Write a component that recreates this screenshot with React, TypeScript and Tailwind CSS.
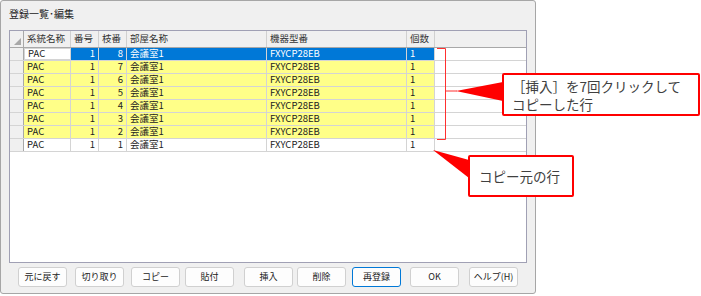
import React from "react";

const font = { fontFamily: '"Noto Sans CJK JP", "Noto Sans", sans-serif' };

type Row = { sys: string; no: string; br: string; room: string; model: string; qty: string };

const rows: Row[] = [8, 7, 6, 5, 4, 3, 2, 1].map((n) => ({
  sys: "PAC",
  no: "1",
  br: String(n),
  room: "会議室1",
  model: "FXYCP28EB",
  qty: "1",
}));

const cols = [
  { label: "系統名称", w: "w-[47px]" },
  { label: "番号", w: "w-[28px]" },
  { label: "枝番", w: "w-[28px]" },
  { label: "部屋名称", w: "w-[140px]" },
  { label: "機器型番", w: "w-[140px]" },
  { label: "個数", w: "w-[28px]" },
];

const buttons = [
  { label: "元に戻す", ml: "ml-[8px]" },
  { label: "切り取り", ml: "ml-[8px]" },
  { label: "コピー", ml: "ml-[7px]" },
  { label: "貼付", ml: "ml-[5px]" },
  { label: "挿入", ml: "ml-[10px]" },
  { label: "削除", ml: "ml-[4px]" },
  { label: "再登録", ml: "ml-[6px]", primary: true },
  { label: "OK", ml: "ml-[9px]" },
  { label: "ヘルプ(H)", ml: "ml-[10px]" },
];

function DataRow({ r, i }: { r: Row; i: number }) {
  const selected = i === 0;
  const bg = selected ? "bg-[#0078d7] text-white" : i === 7 ? "bg-white text-[#222]" : "bg-[#ffff88] text-[#222]";
  const cell = "h-full border-r border-[#d4d4d4] px-[3px] flex items-center";
  return (
    <div className="flex h-[13px] border-b border-[#d4d4d4] text-[9.5px] leading-none">
      <div className="w-[14px] h-full bg-[#f0f0f0] border-r border-[#a8a8a8]" />
      <div
        className={`w-[47px] ${cell} ${
          selected ? "bg-white text-[#222] border border-[#555]" : i === 7 ? "bg-white text-[#222]" : "bg-[#ffff88] text-[#222]"
        }`}
      >
        {r.sys}
      </div>
      <div className={`w-[28px] ${cell} justify-end ${bg}`}>{r.no}</div>
      <div className={`w-[28px] ${cell} justify-end ${bg}`}>{r.br}</div>
      <div className={`w-[140px] ${cell} ${bg}`}>{r.room}</div>
      <div className={`w-[140px] ${cell} ${bg}`}>{r.model}</div>
      <div className={`w-[28px] ${cell} ${bg}`}>{r.qty}</div>
    </div>
  );
}

export default function App() {
  return (
    <div className="relative w-[701px] h-[296px] bg-white overflow-hidden" style={font}>
      {/* dialog window */}
      <div className="w-[536px] h-[294px] border border-[#a6a6a6] rounded-[3px] bg-[#f0f0f0] flex flex-col">
        <div className="h-[29px] pl-[8px] pt-[5px] text-[10px] text-[#222]">登録一覧･編集</div>

        <div className="mx-[8px] h-[233px] border border-[#a0a0b4] bg-white">
          {/* header */}
          <div className="flex h-[17px] bg-[#f0f0f0] border-b border-[#a8a8a8] text-[9.5px] text-[#333] leading-none">
            <div className="w-[14px] h-full border-r border-[#a8a8a8] flex items-end justify-end pb-[2px] pr-[2px]">
              <svg width="7" height="7" viewBox="0 0 7 7">
                <path d="M7 0 L7 7 L0 7 Z" fill="#a8a8a8" />
              </svg>
            </div>
            {cols.map((c) => (
              <div key={c.label} className={`${c.w} h-full flex items-center px-[3px] border-r border-[#d0d0d0]`}>
                {c.label}
              </div>
            ))}
          </div>
          {rows.map((r, i) => (
            <DataRow key={i} r={r} i={i} />
          ))}
        </div>

        <div className="flex mt-[4px] pl-[9px] text-[9px] text-[#222]">
          {buttons.map((b) => (
            <div
              key={b.label}
              className={`${b.ml} w-[49px] h-[20px] rounded-[3px] bg-[#fdfdfd] flex items-center justify-center border ${
                b.primary ? "border-[#0078d7]" : "border-[#d0d0d0]"
              }`}
            >
              {b.label}
            </div>
          ))}
        </div>
      </div>

      {/* annotation: bracket and pointers */}
      <svg className="absolute left-0 top-0" width="701" height="296" viewBox="0 0 701 296">
        <path d="M437 48.5 H445.5 V139.5 H437 M445.5 91 H457" fill="none" stroke="#ff3030" strokeWidth="1" />
        <polygon points="456,91 503,82 503,101" fill="#ff0000" />
        <polygon points="433,150 469,160 469,178" fill="#ff0000" />
      </svg>

      {/* callout 1 */}
      <div className="absolute left-[502px] top-[73px] w-[198px] h-[43px] border-2 border-[#ff0000] rounded-[2px] bg-white pl-[8px] pt-[2px] text-[13.5px] leading-[18px] text-[#404040]">
        <div>［挿入］を7回クリックして</div>
        <div>コピーした行</div>
      </div>

      {/* callout 2 */}
      <div className="absolute left-[468px] top-[155px] w-[106px] h-[42px] border-2 border-[#ff0000] rounded-[2px] bg-white pl-[9px] flex items-center text-[13.5px] text-[#404040]">
        コピー元の行
      </div>
    </div>
  );
}
